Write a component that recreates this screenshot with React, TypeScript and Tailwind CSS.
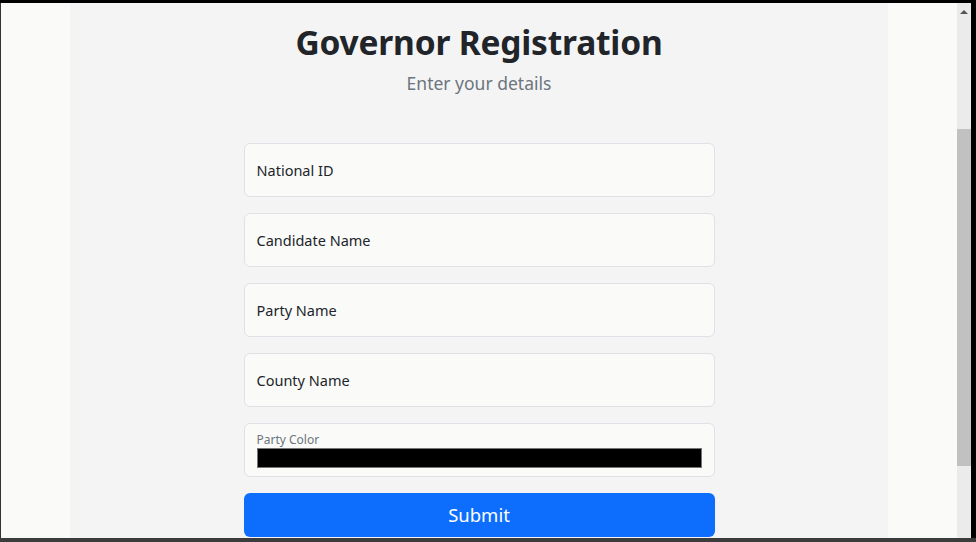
import React from "react";

const fields = ["National ID", "Candidate Name", "Party Name", "County Name"];

export default function App() {
  return (
    <div className="w-[976px] h-[542px] flex flex-col bg-black overflow-hidden font-['Noto_Sans',sans-serif]">
      <div className="h-[3px] bg-black" />
      <div className="flex flex-1 min-h-0">
        <div className="w-px bg-[#333]" />
        {/* page */}
        <div className="flex-1 bg-[#fafaf9] flex justify-center">
          <div className="w-[818px] bg-[#f4f4f5] flex flex-col items-center">
            <h1 className="mt-[18px] text-[33.5px] leading-[42px] font-bold text-[#212529] tracking-[-0.2px]">
              Governor Registration
            </h1>
            <p className="mt-[7px] text-[17.5px] leading-[26px] text-[#6c757d]">Enter your details</p>

            <form className="mt-[47px] w-[471px] flex flex-col gap-4">
              {fields.map((f) => (
                <div
                  key={f}
                  className="h-[54px] rounded-md border border-[#dee2e6] bg-[#fafaf9] flex items-center px-3 pt-[2px] text-[14.5px] text-[#212529]"
                >
                  {f}
                </div>
              ))}
              <div className="h-[54px] rounded-md border border-[#dee2e6] bg-[#fafaf9] px-3 pt-[9px]">
                <div className="text-[12px] leading-[14px] text-[#6c757d]">Party Color</div>
                <div className="mt-[1px] h-[20px] bg-black border border-[#767676]" />
              </div>
              <button
                type="button"
                className="h-[44px] rounded-md bg-[#0d6efd] text-white text-[18.5px]"
              >
                Submit
              </button>
            </form>
          </div>
        </div>
        {/* scrollbar */}
        <div className="w-[14px] bg-[#ebebeb] flex flex-col items-center">
          <div className="mt-[7px] w-0 h-0 border-l-[4px] border-r-[4px] border-b-[4px] border-l-transparent border-r-transparent border-b-[#555]" />
          <div className="mt-[115px] h-[337px] w-full bg-[#c1c1c1]" />
        </div>
        <div className="w-[5px] bg-black" />
      </div>
      <div className="h-[4px] bg-[#3c3c3c]" />
    </div>
  );
}
